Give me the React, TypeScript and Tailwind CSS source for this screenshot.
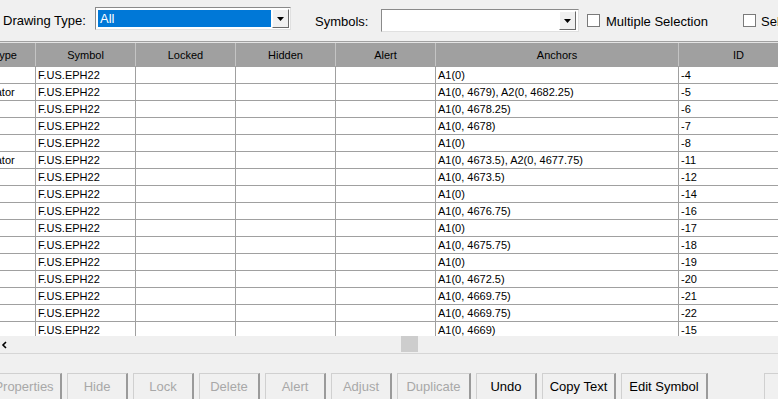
import React from "react";

const FONT = { fontFamily: '"Liberation Sans", Arial, sans-serif' };

const colClasses = ["w-[61px]", "w-[100px]", "w-[100px]", "w-[100px]", "w-[100px]", "w-[243px]", "w-[120px]"];
const headers = ["Type", "Symbol", "Locked", "Hidden", "Alert", "Anchors", "ID"];

const rows: [string, string, string][] = [
  ["Line", "A1(0)", "-4"],
  ["Annotator", "A1(0, 4679), A2(0, 4682.25)", "-5"],
  ["Line", "A1(0, 4678.25)", "-6"],
  ["Line", "A1(0, 4678)", "-7"],
  ["Line", "A1(0)", "-8"],
  ["Annotator", "A1(0, 4673.5), A2(0, 4677.75)", "-11"],
  ["Line", "A1(0, 4673.5)", "-12"],
  ["Line", "A1(0)", "-14"],
  ["Line", "A1(0, 4676.75)", "-16"],
  ["Line", "A1(0)", "-17"],
  ["Line", "A1(0, 4675.75)", "-18"],
  ["Line", "A1(0)", "-19"],
  ["Line", "A1(0, 4672.5)", "-20"],
  ["Line", "A1(0, 4669.75)", "-21"],
  ["Line", "A1(0, 4669.75)", "-22"],
  ["Line", "A1(0, 4669)", "-15"],
];

function ArrowBox() {
  return (
    <div className="flex h-[19px] w-[17px] items-center justify-center border border-t-white border-l-white border-r-[#696969] border-b-[#696969] bg-[#f0f0f0]">
      <svg width="7" height="4" viewBox="0 0 7 4">
        <polygon points="0,0 7,0 3.5,4" fill="#000" />
      </svg>
    </div>
  );
}

function Checkbox() {
  return <div className="h-[13px] w-[13px] border border-[#7a7a7a] bg-white" />;
}

function Btn({ label, w, enabled }: { label: string; w: string; enabled?: boolean }) {
  return (
    <div
      className={`${w} flex h-[30px] shrink-0 items-start justify-center border-t border-l border-[#d0d0d0] border-r-2 border-r-[#9a9a9a] bg-[#f0f0f0] pt-[3px] text-[13px] ${
        enabled ? "text-black" : "text-[#a8a8a8]"
      }`}
    >
      {label}
    </div>
  );
}

export default function App() {
  return (
    <div className="h-[399px] w-[778px] overflow-hidden bg-[#f0f0f0] text-black" style={FONT}>
      {/* Filter bar */}
      <div className="flex h-[42px] items-start border-b border-[#a0a0a0] text-[13px]">
        <span className="mt-[11px] w-[95px] shrink-0 pl-[3px]">Drawing Type:</span>
        <div className="mt-[7px] flex h-[23px] w-[196px] shrink-0 items-center border border-[#8a8a8a] border-b-[#e0e0e0] border-r-[#e0e0e0] bg-white pl-[2px] pr-[1px]">
          <div className="flex h-[17px] flex-1 items-center bg-[#0078d7] pl-[2px] text-white">All</div>
          <div className="ml-[1px]">
            <ArrowBox />
          </div>
        </div>
        <span className="mt-[12px] ml-[24px] w-[66px] shrink-0">Symbols:</span>
        <div className="mt-[9px] flex h-[23px] w-[198px] shrink-0 items-center justify-end border border-[#8a8a8a] border-b-[#e0e0e0] border-r-[#e0e0e0] bg-white pr-[2px]">
          <ArrowBox />
        </div>
        <div className="mt-[14px] ml-[8px] shrink-0">
          <Checkbox />
        </div>
        <span className="mt-[12px] ml-[6px] w-[137px] shrink-0">Multiple Selection</span>
        <div className="mt-[14px] shrink-0">
          <Checkbox />
        </div>
        <span className="mt-[12px] ml-[5px] shrink-0 whitespace-nowrap">Select All</span>
      </div>
      <div className="h-px bg-[#e3e3e3]" />

      {/* Grid */}
      <div className="h-[293px] overflow-hidden text-[11px]">
        <div className="-ml-[25px] w-[900px]">
          <div className="flex h-[23px] bg-[#a0a0a0]">
            {headers.map((h, i) => (
              <div
                key={h}
                className={`${colClasses[i]} flex shrink-0 items-center justify-center border-r border-[#c4c4c4] pt-[1px]`}
              >
                {h}
              </div>
            ))}
          </div>
          {rows.map((r, idx) => {
            const cells = [r[0], "F.US.EPH22", "", "", "", r[1], r[2]];
            return (
              <div key={idx} className="flex h-[17px] bg-white">
                {cells.map((c, i) => (
                  <div
                    key={i}
                    className={`${colClasses[i]} shrink-0 overflow-hidden whitespace-nowrap border-t border-r border-[#a0a0a0] pl-[2px] leading-[16px]`}
                  >
                    {i === 0 ? <span className="-ml-[10px]">{c}</span> : c}
                  </div>
                ))}
              </div>
            );
          })}
        </div>
      </div>

      {/* Horizontal scrollbar */}
      <div className="flex h-[18px] items-center border-b border-[#d6d6d6]">
        <svg width="8" height="8" viewBox="0 0 8 8" className="ml-[1px]">
          <polyline points="5,1 2,4 5,7" fill="none" stroke="#000" strokeWidth="1.6" />
        </svg>
        <div className="ml-[392px] h-[16px] w-[17px] self-start bg-[#cdcdcd]" />
      </div>

      {/* Buttons */}
      <div className="mt-[19px] flex gap-[5px] -ml-[13px]">
        <Btn label="Properties" w="w-[75px]" />
        <Btn label="Hide" w="w-[61px]" />
        <Btn label="Lock" w="w-[61px]" />
        <Btn label="Delete" w="w-[61px]" />
        <Btn label="Alert" w="w-[61px]" />
        <Btn label="Adjust" w="w-[61px]" />
        <Btn label="Duplicate" w="w-[74px]" />
        <Btn label="Undo" w="w-[61px]" enabled />
        <Btn label="Copy Text" w="w-[74px]" enabled />
        <Btn label="Edit Symbol" w="w-[87px]" enabled />
        <div className="ml-[51px]">
          <Btn label="" w="w-[61px]" />
        </div>
      </div>
    </div>
  );
}
